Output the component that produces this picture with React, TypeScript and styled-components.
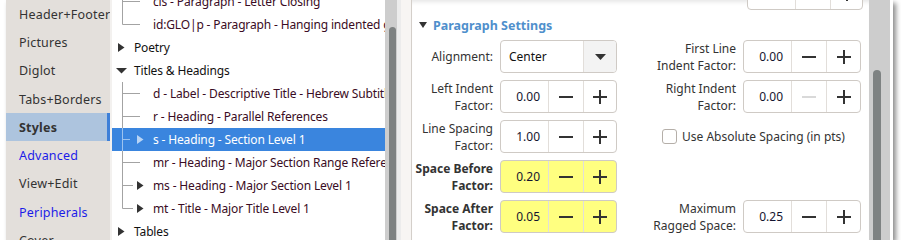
import React from "react";
import styled, { createGlobalStyle } from "styled-components";

const GlobalStyle = createGlobalStyle`
  body {
    margin: 0;
    background: #fff;
    font-family: "Noto Sans", "DejaVu Sans", sans-serif;
    color: #222;
  }
`;

const Frame = styled.div`
  display: flex;
  margin-left: 6px;
  width: 887px;
  height: 240px;
  overflow: hidden;
  background: #fff;
  box-shadow: 3px 3px 5px rgba(0, 0, 0, 0.45);
`;

// ---- left nav ----
const Sidebar = styled.nav`
  width: 104px;
  flex-shrink: 0;
  background: #e3dfdb;
`;

const SideItem = styled.div<{ $active?: boolean; $link?: boolean }>`
  height: 28.3px;
  box-sizing: border-box;
  display: flex;
  align-items: center;
  padding-left: 13px;
  font-size: 12.5px;
  letter-spacing: 0.2px;
  white-space: nowrap;
  color: ${(p) => (p.$link ? "#1c1ce8" : "#333")};
  font-weight: ${(p) => (p.$active ? 700 : 400)};
  background: ${(p) => (p.$active ? "#adc4de" : "transparent")};
  border-right: 3px solid ${(p) => (p.$active ? "#3d7fd8" : "transparent")};
`;

const SideGap = styled.div`
  width: 2px;
  flex-shrink: 0;
  background: #f3f1ef;
`;

// ---- tree ----
const TreeList = styled.div`
  width: 273px;
  flex-shrink: 0;
  overflow: hidden;
`;

const TreeRows = styled.div`
  margin-top: -10px;
`;

const TreeRow = styled.div<{ $selected?: boolean; $child?: boolean }>`
  height: 23px;
  display: flex;
  align-items: center;
  white-space: nowrap;
  font-size: 12px;
  letter-spacing: -0.15px;
  color: ${(p) => (p.$selected ? "#fff" : p.$child ? "#3a0c24" : "#111")};
  background: ${(p) => (p.$selected ? "#3a85de" : "transparent")};

  svg {
    flex-shrink: 0;
  }
`;

const ScrollTrack = styled.div<{ $w: number; $thumbTop: number }>`
  width: ${(p) => p.$w}px;
  flex-shrink: 0;
  background: #cdcdcd;
  display: flex;
  flex-direction: column;
  padding-top: ${(p) => p.$thumbTop}px;
  padding-left: 4px;
  box-sizing: border-box;
`;

const ScrollThumb = styled.div<{ $w: number }>`
  width: ${(p) => p.$w}px;
  flex: 1;
  background: #7e8282;
  border-radius: 4px 4px 0 0;
`;

const Splitter = styled.div`
  width: 15px;
  flex-shrink: 0;
  box-sizing: border-box;
  background: #f7f5f3;
  border-left: 4px solid #ececec;
  border-right: 1px solid #d4cfca;
`;

// ---- settings ----
const Settings = styled.section`
  width: 457px;
  flex-shrink: 0;
  overflow: hidden;
  box-sizing: border-box;
  box-shadow: inset 0 5px 4px -3px rgba(0, 0, 0, 0.1);
`;

const StubRow = styled.div`
  height: 33px;
  margin-top: -23px;
  display: flex;
  justify-content: flex-end;
  padding-right: 6px;
`;

const StubBox = styled.div`
  width: 116px;
  display: grid;
`;

const SectionHead = styled.div`
  height: 30px;
  display: flex;
  align-items: center;
  padding-left: 7px;
  gap: 6px;
  font-size: 12.5px;
  font-weight: 700;
  color: #4f8fcc;
`;

const Grid = styled.div`
  display: grid;
  grid-template-columns: 81px 117px 112px 118px;
  grid-auto-rows: 33px;
  column-gap: 7px;
  row-gap: 7px;
`;

const Label = styled.div<{ $bold?: boolean }>`
  display: flex;
  align-items: center;
  justify-content: flex-end;
  font-size: 12px;
  line-height: 17px;
  color: #333;
  font-weight: ${(p) => (p.$bold ? 700 : 400)};
`;

const LabelText = styled.span`
  text-align: right;
  white-space: nowrap;
`;

const Box = styled.div<{ $yellow?: boolean; $cols: string }>`
  display: grid;
  grid-template-columns: ${(p) => p.$cols};
  box-sizing: border-box;
  border: 1px solid #cfcac5;
  border-radius: 4px;
  background: ${(p) => (p.$yellow ? "#ffff80" : "#fff")};
  overflow: hidden;
`;

const ValueCell = styled.div`
  display: flex;
  align-items: center;
  justify-content: flex-end;
  padding-right: 8px;
  font-size: 12px;
  color: #141430;
`;

const ComboText = styled.div`
  display: flex;
  align-items: center;
  padding-left: 8px;
  font-size: 12px;
  color: #111;
`;

const StepButton = styled.div<{ $grey?: boolean }>`
  display: flex;
  align-items: center;
  justify-content: center;
  border-left: 1px solid #e2deda;
  background: ${(p) => (p.$grey ? "#f3f3f3" : "transparent")};
`;

const CheckRow = styled.label`
  grid-column: 3 / span 2;
  display: flex;
  align-items: center;
  gap: 5px;
  padding-left: 38px;
  font-size: 12px;
  color: #333;
  white-space: nowrap;
`;

const CheckSquare = styled.span`
  width: 15px;
  height: 15px;
  box-sizing: border-box;
  border: 1px solid #b5afa9;
  border-radius: 3px;
  background: #fff;
`;

const WhiteEdge = styled.div`
  width: 3px;
  flex-shrink: 0;
  background: #fff;
`;

// ---- drawings ----
const Minus = ({ off }: { off?: boolean }) => (
  <svg width="14" height="14" viewBox="0 0 14 14">
    <line x1="0" y1="7" x2="14" y2="7" stroke={off ? "#d9d9d9" : "#333"} strokeWidth="2" />
  </svg>
);

const Plus = () => (
  <svg width="14" height="14" viewBox="0 0 14 14">
    <line x1="0" y1="7" x2="14" y2="7" stroke="#333" strokeWidth="2" />
    <line x1="7" y1="0" x2="7" y2="14" stroke="#333" strokeWidth="2" />
  </svg>
);

const DownArrow = ({ w = 10, h = 6, color = "#333" }) => (
  <svg width={w} height={h} viewBox={`0 0 ${w} ${h}`}>
    <polygon points={`0,0 ${w},0 ${w / 2},${h}`} fill={color} />
  </svg>
);

type Gutter = "closed" | "open" | "child" | "childArrow" | "last" | "lastArrow";

// tree guide lines + expanders, drawn per row
const TreeGutter = ({ kind, selected }: { kind: Gutter; selected?: boolean }) => {
  const line = selected ? "#9cc3ef" : "#a3a3a3";
  const arrow = selected ? "#b8d4f5" : "#333";
  if (kind === "closed")
    return (
      <svg width="22" height="23">
        <polygon points="6,7 12.5,11.5 6,16" fill={arrow} />
      </svg>
    );
  if (kind === "open")
    return (
      <svg width="22" height="23">
        <polygon points="4,9 15,9 9.5,14.5" fill={arrow} />
      </svg>
    );
  const last = kind === "last" || kind === "lastArrow";
  const hasArrow = kind === "childArrow" || kind === "lastArrow";
  return (
    <svg width="41" height="23">
      <line x1="10.5" y1="0" x2="10.5" y2={last ? 11.5 : 23} stroke={line} />
      <line x1="10.5" y1="11.5" x2={hasArrow ? (selected ? 18 : 21) : 28} y2="11.5" stroke={line} />
      {hasArrow && <polygon points="25,7 31.5,11.5 25,16" fill={arrow} />}
    </svg>
  );
};

const SpinBox = ({ value, yellow, minusOff }: { value: string; yellow?: boolean; minusOff?: boolean }) => (
  <Box $yellow={yellow} $cols="47px 35px 1fr">
    <ValueCell>{value}</ValueCell>
    <StepButton>
      <Minus off={minusOff} />
    </StepButton>
    <StepButton>
      <Plus />
    </StepButton>
  </Box>
);

const FieldLabel = ({ lines, bold }: { lines: string[]; bold?: boolean }) => (
  <Label $bold={bold}>
    <LabelText>
      {lines.map((l, i) => (
        <React.Fragment key={l}>
          {i > 0 && <br />}
          {l}
        </React.Fragment>
      ))}
    </LabelText>
  </Label>
);

const navItems: Array<[string, boolean?, boolean?]> = [
  ["Header+Footer"],
  ["Pictures"],
  ["Diglot"],
  ["Tabs+Borders"],
  ["Styles", true],
  ["Advanced", false, true],
  ["View+Edit"],
  ["Peripherals", false, true],
  ["Cover"],
];

const treeItems: Array<{ text: string; kind: Gutter; sel?: boolean }> = [
  { text: "cls - Paragraph - Letter Closing", kind: "child" },
  { text: "id:GLO|p - Paragraph - Hanging indented glossary", kind: "last" },
  { text: "Poetry", kind: "closed" },
  { text: "Titles & Headings", kind: "open" },
  { text: "d - Label - Descriptive Title - Hebrew Subtitle", kind: "child" },
  { text: "r - Heading - Parallel References", kind: "child" },
  { text: "s - Heading - Section Level 1", kind: "childArrow", sel: true },
  { text: "mr - Heading - Major Section Range References", kind: "child" },
  { text: "ms - Heading - Major Section Level 1", kind: "childArrow" },
  { text: "mt - Title - Major Title Level 1", kind: "lastArrow" },
  { text: "Tables", kind: "closed" },
];

export default function App() {
  return (
    <>
      <GlobalStyle />
      <Frame>
        <Sidebar>
          {navItems.map(([label, active, link]) => (
            <SideItem key={label} $active={active} $link={link}>
              {label}
            </SideItem>
          ))}
        </Sidebar>
        <SideGap />
        <TreeList>
          <TreeRows>
            {treeItems.map((it) => {
              const child = it.kind !== "open" && it.kind !== "closed";
              return (
                <TreeRow key={it.text} $selected={it.sel} $child={child}>
                  <TreeGutter kind={it.kind} selected={it.sel} />
                  <span>{it.text}</span>
                </TreeRow>
              );
            })}
          </TreeRows>
        </TreeList>
        <ScrollTrack $w={12} $thumbTop={27}>
          <ScrollThumb $w={7} />
        </ScrollTrack>
        <Splitter />
        <Settings>
          <StubRow>
            <StubBox>
              <SpinBox value="" />
            </StubBox>
          </StubRow>
          <SectionHead>
            <DownArrow w={8} h={6} color="#333" />
            Paragraph Settings
          </SectionHead>
          <Grid>
            <FieldLabel lines={["Alignment:"]} />
            <Box $cols="82px 1fr">
              <ComboText>Center</ComboText>
              <StepButton $grey>
                <DownArrow w={11} h={6} />
              </StepButton>
            </Box>
            <FieldLabel lines={["First Line", "Indent Factor:"]} />
            <SpinBox value="0.00" />

            <FieldLabel lines={["Left Indent", "Factor:"]} />
            <SpinBox value="0.00" />
            <FieldLabel lines={["Right Indent", "Factor:"]} />
            <SpinBox value="0.00" minusOff />

            <FieldLabel lines={["Line Spacing", "Factor:"]} />
            <SpinBox value="1.00" />
            <CheckRow>
              <CheckSquare />
              Use Absolute Spacing (in pts)
            </CheckRow>

            <FieldLabel lines={["Space Before", "Factor:"]} bold />
            <SpinBox value="0.20" yellow />
            <div />
            <div />

            <FieldLabel lines={["Space After", "Factor:"]} bold />
            <SpinBox value="0.05" yellow />
            <FieldLabel lines={["Maximum", "Ragged Space:"]} />
            <SpinBox value="0.25" />
          </Grid>
        </Settings>
        <ScrollTrack $w={21} $thumbTop={70}>
          <ScrollThumb $w={8} />
        </ScrollTrack>
        <WhiteEdge />
      </Frame>
    </>
  );
}
